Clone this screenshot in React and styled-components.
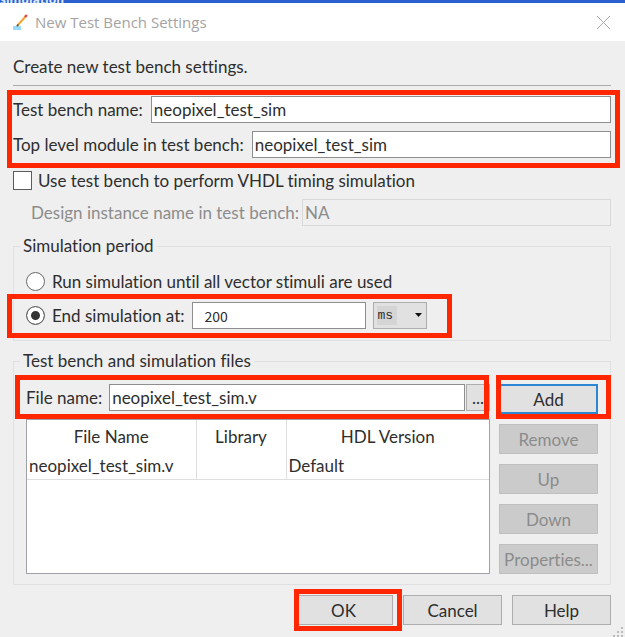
import React, { useState } from 'react';
import styled, { createGlobalStyle } from 'styled-components';

const GlobalStyle = createGlobalStyle`
  * {
    box-sizing: border-box;
  }
  body {
    margin: 0;
    background: #efefef;
    color: #2e2e2e;
    font-family: Lato, 'Noto Sans', sans-serif;
    font-size: 17px;
    font-variant-ligatures: none;
  }
  input, button, select, table {
    color: inherit;
    font: inherit;
    font-variant-ligatures: none;
  }
`;

const ParentWindow = styled.div`
  display: flex;
  align-items: flex-end;
  height: 3px;
  overflow: hidden;
  background: #2a5fce;
  color: #dfe8fb;
  font-family: 'Noto Sans', sans-serif;
  font-size: 12px;
  font-weight: bold;
  line-height: 7px;
`;

const TitleBar = styled.header`
  display: flex;
  align-items: center;
  height: 38px;
  padding: 0 14px 0 12px;
  background: #fff;
`;

const Title = styled.h1`
  flex: 1;
  margin: 0 0 0 7px;
  color: #a3a3a3;
  font-family: 'Open Sans', sans-serif;
  font-size: 15px;
  font-weight: normal;
`;

const CloseButton = styled.button`
  display: flex;
  padding: 0;
  border: 0;
  background: none;
`;

const Body = styled.main`
  position: relative;
  padding: 14px 14px 12px 13px;
`;

const Intro = styled.p`
  margin: 0 0 10px;
  padding-bottom: 6px;
  border-bottom: 1px solid #a8aba8;
  line-height: 24px;
`;

const NameRows = styled.div`
  position: relative;
  display: flex;
  flex-direction: column;
  gap: 8px;
`;

const Row = styled.div`
  position: relative;
  display: flex;
  align-items: center;
  gap: 8px;
  height: 27px;
  color: ${props => (props.$muted ? '#8c8c8c' : 'inherit')};
`;

const DesignRow = styled(Row)`
  gap: 3px;
  margin-top: 9px;
  padding-left: 18px;
`;

const FileRow = styled(Row)`
  gap: 1px;

  label {
    margin-right: 6px;
  }
`;

const TextInput = styled.input`
  flex: 1;
  min-width: 0;
  height: 27px;
  padding: 0 2px;
  border: 1px solid #8e8e8e;
  border-radius: 0;
  background: #fff;

  &:disabled {
    border-color: #d9d9d9;
    background: #efefef;
    color: #8c8c8c;
  }
`;

const PeriodInput = styled(TextInput)`
  flex: 0 0 174px;
  padding-left: 12px;
  font-family: 'Noto Sans CJK JP', sans-serif;
  font-size: 14px;
`;

const CheckRow = styled.div`
  display: flex;
  align-items: center;
  gap: 6px;
  height: 20px;
  margin-top: 12px;
`;

const Check = styled.input`
  appearance: none;
  flex: none;
  width: 19px;
  height: 19px;
  margin: 0;
  border: 1px solid #5c5c5c;
  background: #fff;

  &:checked {
    background: #333;
    box-shadow: inset 0 0 0 4px #fff;
  }
`;

const Radio = styled(Check)`
  border-color: #6a6a6a;
  border-radius: 50%;
`;

const Group = styled.fieldset`
  min-width: 0;
  margin: 10px 0 0;
  padding: 12px 12px 11px;
  border: 1px solid #e0e0e0;

  legend {
    margin-left: -6px;
    padding: 0 3px;
    line-height: 20px;
  }
`;

const FilesGroup = styled(Group)`
  padding: 13px 12px 10px;
`;

const Period = styled.div`
  display: flex;
  flex-direction: column;
  gap: 7px;
`;

const PeriodRow = styled(Row)`
  gap: 7px;
`;

const Unit = styled.div`
  position: relative;

  svg {
    position: absolute;
    top: 11px;
    right: 5px;
    pointer-events: none;
  }
`;

const UnitSelect = styled.select`
  appearance: none;
  width: 54px;
  height: 27px;
  padding: 0 4px;
  border: 1px solid #adadad;
  border-radius: 0;
  background: linear-gradient(#d5d5d5, #d5d5d5) 3px 3px / 20px 19px no-repeat #e1e1e1;
  font-family: 'Liberation Mono', monospace;
  font-size: 13px;
`;

const Files = styled.div`
  display: flex;
  gap: 9px;
`;

const FileArea = styled.div`
  display: flex;
  flex: 1;
  flex-direction: column;
  gap: 8px;
  min-width: 0;
`;

const Side = styled.div`
  display: flex;
  flex-direction: column;
  gap: 10px;
`;

const TableBox = styled.div`
  flex: 1;
  border: 1px solid #9fa1a8;
  background: #fff;
`;

const Table = styled.table`
  width: 100%;
  border-collapse: collapse;
  table-layout: fixed;

  th, td {
    padding: 0 2px;
    border-right: 1px solid #dedede;
    white-space: nowrap;
  }
  th {
    height: 33px;
    font-weight: normal;
  }
  td {
    height: 26px;
    border-bottom: 1px solid #dedede;
  }
  th:nth-child(1) {
    width: 169px;
  }
  th:nth-child(2) {
    width: 90px;
  }
  th:last-child, td:last-child {
    border-right: 0;
  }
`;

const Button = styled.button`
  width: 99px;
  height: 30px;
  padding: 0;
  border: ${props => (props.$focused ? '2px solid #2c86d4' : '1px solid #adadad')};
  background: #e1e1e1;

  &:disabled {
    border-color: #bfbfbf;
    background: #cbcbcb;
    color: #8b8b8b;
  }
`;

const BrowseButton = styled(Button)`
  width: 24px;
  height: 27px;
`;

const Marked = styled.div`
  position: relative;
  display: flex;
`;

// red callout frame laid over a control or a group of controls
const Callout = styled.span`
  position: absolute;
  inset: ${props => props.$inset};
  z-index: 1;
  border: 5px solid #ff2600;
  pointer-events: none;
`;

const Footer = styled.footer`
  display: flex;
  justify-content: flex-end;
  gap: 10px;
  margin-top: 10px;
`;

const Grip = styled.svg`
  position: absolute;
  right: 0;
  bottom: 0;
`;

const PencilIcon = () => (
  <svg width="16" height="17" viewBox="0 0 16 17" aria-hidden="true">
    <path d="M1 12h8v4H1z" fill="#9adcf7" />
    <path d="M5.5 11.5L13.5 2.5" stroke="#f0a632" strokeWidth="2" />
    <path d="M4.8 12.2l1.6-1.7" stroke="#5e5140" strokeWidth="1.6" />
    <path d="M13 3l1.8-2" stroke="#e34848" strokeWidth="2.6" />
  </svg>
);

const App = () => {
  const [timing, setTiming] = useState(false);
  const [period, setPeriod] = useState('end');

  return (
    <>
      <GlobalStyle />
      <ParentWindow>simulation</ParentWindow>
      <TitleBar>
        <PencilIcon />
        <Title>New Test Bench Settings</Title>
        <CloseButton type="button" aria-label="Close">
          <svg width="15" height="15" viewBox="0 0 15 15">
            <path d="M1 1l13 13M14 1L1 14" stroke="#a8a8a8" fill="none" />
          </svg>
        </CloseButton>
      </TitleBar>
      <Body>
        <Intro>Create new test bench settings.</Intro>
        <NameRows>
          <Row>
            <label htmlFor="bench">Test bench name:</label>
            <TextInput id="bench" defaultValue="neopixel_test_sim" />
          </Row>
          <Row>
            <label htmlFor="top">Top level module in test bench:</label>
            <TextInput id="top" defaultValue="neopixel_test_sim" />
          </Row>
          <Callout $inset="-6px -9px -10px -6px" />
        </NameRows>
        <CheckRow>
          <Check
            type="checkbox"
            id="timing"
            checked={timing}
            onChange={e => setTiming(e.target.checked)}
          />
          <label htmlFor="timing">Use test bench to perform VHDL timing simulation</label>
        </CheckRow>
        <DesignRow $muted={!timing}>
          <label htmlFor="design">Design instance name in test bench:</label>
          <TextInput id="design" defaultValue="NA" disabled={!timing} />
        </DesignRow>

        <Group>
          <legend>Simulation period</legend>
          <Period>
            <PeriodRow>
              <Radio
                type="radio"
                name="period"
                id="all"
                checked={period === 'all'}
                onChange={() => setPeriod('all')}
              />
              <label htmlFor="all">Run simulation until all vector stimuli are used</label>
            </PeriodRow>
            <PeriodRow>
              <Radio
                type="radio"
                name="period"
                id="end"
                checked={period === 'end'}
                onChange={() => setPeriod('end')}
              />
              <label htmlFor="end">End simulation at:</label>
              <PeriodInput aria-label="End time" defaultValue="200" />
              <Unit>
                <UnitSelect aria-label="Time unit" defaultValue="ms">
                  <option>s</option>
                  <option>ms</option>
                  <option>us</option>
                  <option>ns</option>
                </UnitSelect>
                <svg width="7" height="5" viewBox="0 0 7 5">
                  <path d="M0 0h7L3.5 4z" fill="#111" />
                </svg>
              </Unit>
              <Callout $inset="-8px 146px -9px -19px" />
            </PeriodRow>
          </Period>
        </Group>

        <FilesGroup>
          <legend>Test bench and simulation files</legend>
          <Files>
            <FileArea>
              <FileRow>
                <label htmlFor="file">File name:</label>
                <TextInput id="file" defaultValue="neopixel_test_sim.v" />
                <BrowseButton type="button">...</BrowseButton>
                <Callout $inset="-9px 1px -8px -11px" />
              </FileRow>
              <TableBox>
                <Table>
                  <thead>
                    <tr>
                      <th>File Name</th>
                      <th>Library</th>
                      <th>HDL Version</th>
                    </tr>
                  </thead>
                  <tbody>
                    <tr>
                      <td>neopixel_test_sim.v</td>
                      <td />
                      <td>Default</td>
                    </tr>
                  </tbody>
                </Table>
              </TableBox>
            </FileArea>
            <Side>
              <Marked>
                <Button type="button" $focused>Add</Button>
                <Callout $inset="-9px -13px -5px -3px" />
              </Marked>
              <Button type="button" disabled>Remove</Button>
              <Button type="button" disabled>Up</Button>
              <Button type="button" disabled>Down</Button>
              <Button type="button" disabled>Properties...</Button>
            </Side>
          </Files>
        </FilesGroup>

        <Footer>
          <Marked>
            <Button type="button">OK</Button>
            <Callout $inset="-6px -9px -6px 0" />
          </Marked>
          <Button type="button">Cancel</Button>
          <Button type="button">Help</Button>
        </Footer>
        <Grip width="12" height="10" viewBox="0 0 12 10" aria-hidden="true">
          <path d="M8 0h2v2H8zM4 4h2v2H4zM8 4h2v2H8zM0 8h2v2H0zM4 8h2v2H4zM8 8h2v2H8z" fill="#bcbcbc" />
        </Grip>
      </Body>
    </>
  );
};

export default App;
